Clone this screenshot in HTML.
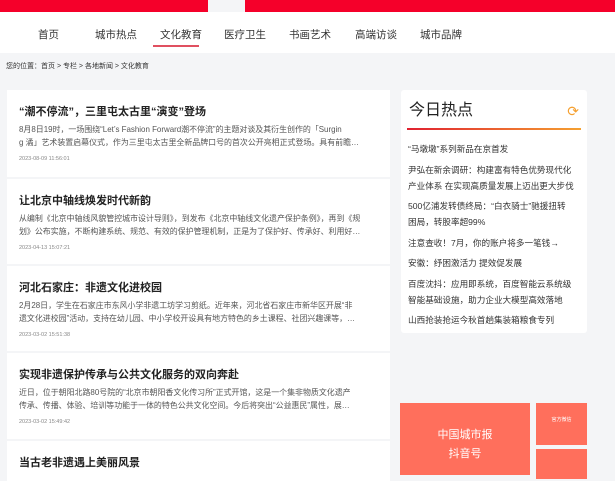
<!DOCTYPE html>
<html><head><meta charset="utf-8"><style>
*{margin:0;padding:0;box-sizing:border-box}
body{width:615px;height:475px;overflow:hidden;background:#f4f5f7;font-family:"Liberation Sans","Noto Sans CJK SC",sans-serif;position:relative}
.a{position:absolute}
.nav{top:12px;left:0;width:615px;height:41px;background:#fff}
.nav span{position:absolute;top:15px;font-size:10.5px;color:#333}
.card{position:absolute;left:7px;width:383px;background:#fff;padding:0 12px;white-space:nowrap;overflow:hidden}
.card h3{font-size:11px;font-weight:bold;color:#222;margin-top:14px;line-height:16px}
.card p{font-size:7.95px;color:#555;line-height:13px;margin-top:3px}
.card i{display:block;font-style:normal;font-size:5.5px;color:#888;margin-top:7px}
.hot{left:401px;top:90px;width:186px;height:243px;background:#fff;border-radius:3px;white-space:nowrap}
.hot div{font-size:8.6px;color:#333;line-height:16px;margin:0 7px}
</style></head><body>
<div class="a" style="top:0;left:0;width:208px;height:12px;background:#f5002a"></div>
<div class="a" style="top:0;left:245px;width:370px;height:12px;background:#f5002a"></div>
<div class="a nav">
<span style="left:38px">首页</span><span style="left:95px">城市热点</span><span style="left:160px">文化教育</span><span style="left:224px">医疗卫生</span><span style="left:289px">书画艺术</span><span style="left:355px">高端访谈</span><span style="left:420px">城市品牌</span>
<div class="a" style="left:153px;top:33px;width:46px;height:2px;background:#e05060"></div>
</div>
<div class="a" style="top:61px;left:6px;font-size:7px;color:#333">您的位置：首页 &gt; 专栏 &gt; 各地新闻 &gt; 文化教育</div>
<div class="card" style="top:90px;height:87px"><h3>“潮不停流”，三里屯太古里“演变”登场</h3><p>8月8日19时，一场围绕“Let’s Fashion Forward潮不停流”的主题对谈及其衍生创作的「Surgin<br>g 潏」艺术装置启幕仪式，作为三里屯太古里全新品牌口号的首次公开亮相正式登场。具有前瞻…</p><i>2023-08-09 11:56:01</i></div>
<div class="card" style="top:179px;height:85px"><h3>让北京中轴线焕发时代新韵</h3><p>从编制《北京中轴线风貌管控城市设计导则》，到发布《北京中轴线文化遗产保护条例》，再到《规<br>划》公布实施，不断构建系统、规范、有效的保护管理机制，正是为了保护好、传承好、利用好…</p><i>2023-04-13 15:07:21</i></div>
<div class="card" style="top:266px;height:85px"><h3>河北石家庄：非遗文化进校园</h3><p>2月28日，学生在石家庄市东风小学非遗工坊学习剪纸。近年来，河北省石家庄市新华区开展“非<br>遗文化进校园”活动，支持在幼儿园、中小学校开设具有地方特色的乡土课程、社团兴趣课等，…</p><i>2023-03-02 15:51:38</i></div>
<div class="card" style="top:353px;height:86px"><h3>实现非遗保护传承与公共文化服务的双向奔赴</h3><p>近日，位于朝阳北路80号院的“北京市朝阳香文化传习所”正式开馆，这是一个集非物质文化遗产<br>传承、传播、体验、培训等功能于一体的特色公共文化空间。今后将突出“公益惠民”属性，展…</p><i>2023-03-02 15:49:42</i></div>
<div class="card" style="top:441px;height:40px"><h3>当古老非遗遇上美丽风景</h3></div>
<div class="a hot">
<div style="font-size:16px;color:#222;margin:10px 8px 0;line-height:22px">今日热点<span style="float:right;color:#f5a030;font-size:14px">⟳</span></div>
<div style="height:2px;margin:6px 6px 11px;background:linear-gradient(90deg,#e02030,#f5a030)"></div>
<div style="margin-bottom:4.5px">“马墩墩”系列新品在京首发</div>
<div style="margin-bottom:4.5px">尹弘在新余调研：构建富有特色优势现代化<br>产业体系 在实现高质量发展上迈出更大步伐</div>
<div style="margin-bottom:4.5px">500亿浦发转债终局：“白衣骑士”驰援扭转<br>困局，转股率超99%</div>
<div style="margin-bottom:4.5px">注意查收！7月，你的账户将多一笔钱→</div>
<div style="margin-bottom:4.5px">安徽：纾困激活力 提效促发展</div>
<div style="margin-bottom:4.5px">百度沈抖：应用即系统，百度智能云系统级<br>智能基础设施，助力企业大模型高效落地</div>
<div>山西抢装抢运今秋首趟集装箱粮食专列</div>
</div>
<div class="a" style="left:400px;top:403px;width:130px;height:72px;background:#ff6f5c;color:#fff;font-size:11px;text-align:center;padding-top:23px;line-height:19px">中国城市报<br>抖音号</div>
<div class="a" style="left:536px;top:403px;width:51px;height:42px;background:#ff6f5c;color:#fff;font-size:5px;text-align:center;padding-top:13px">官方微信</div>
<div class="a" style="left:536px;top:449px;width:51px;height:30px;background:#ff6f5c"></div>
</body></html>
